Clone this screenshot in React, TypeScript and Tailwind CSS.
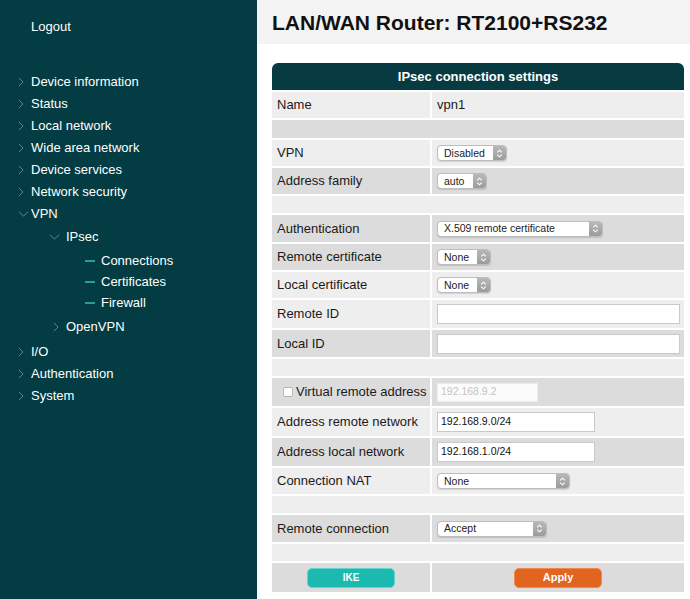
import React from "react";

const FONT = { fontFamily: '"Liberation Sans", Arial, Helvetica, sans-serif' };

function ChevRight() {
  return (
    <svg width="6" height="10" viewBox="0 0 6 10" className="block">
      <polyline points="0.8,0.8 5,5 0.8,9.2" fill="none" stroke="#4f8a8e" strokeWidth="1" />
    </svg>
  );
}

function ChevDown() {
  return (
    <svg width="11" height="6" viewBox="0 0 11 6" className="block">
      <polyline points="0.8,0.8 5.5,5 10.2,0.8" fill="none" stroke="#4f8a8e" strokeWidth="1" />
    </svg>
  );
}

function Dash() {
  return <div className="w-[10px] h-[2px] bg-[#2c9c95]" />;
}

function TopItem({ label, open }: { label: string; open?: boolean }) {
  return (
    <div className="flex items-center h-[22px] pl-[18px]">
      <div className="w-[13px] flex items-center">{open ? <ChevDown /> : <ChevRight />}</div>
      <span>{label}</span>
    </div>
  );
}

function Sidebar() {
  return (
    <div className="w-[257px] shrink-0 bg-[#033c42] text-white text-[13px] h-[599px]">
      <div className="h-[53px] flex items-center pl-[31px]">Logout</div>
      <div className="mt-[18px]">
        <TopItem label="Device information" />
        <TopItem label="Status" />
        <TopItem label="Local network" />
        <TopItem label="Wide area network" />
        <TopItem label="Device services" />
        <TopItem label="Network security" />
        <TopItem label="VPN" open />
        <div className="flex items-center h-[22px] pl-[49px] mt-[1px]">
          <div className="w-[17px] flex items-center">
            <ChevDown />
          </div>
          <span>IPsec</span>
        </div>
        <div className="mt-[2px]">
          {["Connections", "Certificates", "Firewall"].map((t) => (
            <div key={t} className="flex items-center h-[21px] pl-[85px]">
              <div className="w-[16px] flex items-center">
                <Dash />
              </div>
              <span>{t}</span>
            </div>
          ))}
        </div>
        <div className="flex items-center h-[22px] pl-[53px] mt-[3px]">
          <div className="w-[13px] flex items-center">
            <ChevRight />
          </div>
          <span>OpenVPN</span>
        </div>
        <div className="mt-[3px]">
          <TopItem label="I/O" />
          <TopItem label="Authentication" />
          <TopItem label="System" />
        </div>
      </div>
    </div>
  );
}

function SelectArrows() {
  return (
    <svg width="7" height="9" viewBox="0 0 7 9" className="block">
      <polyline points="1.2,3.4 3.5,1.2 5.8,3.4" fill="none" stroke="#ffffff" strokeWidth="1.1" />
      <polyline points="1.2,5.6 3.5,7.8 5.8,5.6" fill="none" stroke="#ffffff" strokeWidth="1.1" />
    </svg>
  );
}

function FakeSelect({ text, width }: { text: string; width: number }) {
  return (
    <div
      className="h-[16px] flex items-stretch rounded-[4px] border border-[#bdbdbd] bg-white overflow-hidden shadow-[0_1px_1px_rgba(0,0,0,0.12)]"
      style={{ width }}
    >
      <div className="flex-1 flex items-center pl-[6px] text-[10.5px] text-[#222] leading-none">{text}</div>
      <div className="w-[13px] bg-gradient-to-b from-[#b8b8b8] to-[#9c9c9c] flex items-center justify-center">
        <SelectArrows />
      </div>
    </div>
  );
}

function FakeInput({ value, width, disabled }: { value?: string; width: number; disabled?: boolean }) {
  return (
    <div
      className={
        disabled
          ? "h-[19px] bg-[#fbfbfb] border border-[#ececec] flex items-center pl-[3px] text-[10.5px] text-[#c4c4c4]"
          : "h-[20px] bg-white border border-[#c9c9c9] flex items-center pl-[3px] text-[10.5px] text-[#111]"
      }
      style={{ width }}
    >
      {value}
    </div>
  );
}

type RowProps = {
  label?: React.ReactNode;
  value?: React.ReactNode;
  dark?: boolean;
  h: string;
};

function Row({ label, value, dark, h }: RowProps) {
  const bg = dark ? "bg-[#dcdcdc]" : "bg-[#eeeeee]";
  return (
    <div className={`flex gap-[2px] ${h}`}>
      <div className={`w-[158px] shrink-0 ${bg} flex items-center pl-[5px]`}>{label}</div>
      <div className={`flex-1 ${bg} flex items-center pl-[5px]`}>{value}</div>
    </div>
  );
}

function Spacer({ dark }: { dark?: boolean }) {
  return <div className={`h-[17px] ${dark ? "bg-[#dcdcdc]" : "bg-[#eeeeee]"}`} />;
}

export default function App() {
  return (
    <div className="flex w-[690px] h-[599px] overflow-hidden bg-white" style={FONT}>
      <Sidebar />
      <div className="flex-1 bg-white">
        <div className="h-[44px] bg-[#f3f3f3] flex items-center pl-[15px]">
          <h1 className="text-[21px] font-bold text-[#111] leading-none">LAN/WAN Router: RT2100+RS232</h1>
        </div>
        <div className="ml-[15px] mt-[19px] w-[412px] flex flex-col gap-[2px] text-[13px] text-[#1a1a1a]">
          <div className="h-[27px] rounded-t-[6px] bg-[#073b41] flex items-center justify-center text-white font-bold text-[13px]">
            IPsec connection settings
          </div>
          <Row h="h-[26px]" label="Name" value="vpn1" />
          <div className="h-[18px] bg-[#dcdcdc]" />
          <Row h="h-[26px]" label="VPN" value={<FakeSelect text="Disabled" width={70} />} />
          <Row h="h-[26px]" dark label="Address family" value={<FakeSelect text="auto" width={50} />} />
          <Spacer />
          <Row h="h-[27px]" dark label="Authentication" value={<FakeSelect text="X.509 remote certificate" width={166} />} />
          <Row h="h-[26px]" dark label="Remote certificate" value={<FakeSelect text="None" width={54} />} />
          <Row h="h-[26px]" label="Local certificate" value={<FakeSelect text="None" width={54} />} />
          <Row h="h-[28px]" label="Remote ID" value={<FakeInput width={243} />} />
          <Row h="h-[27px]" dark label="Local ID" value={<FakeInput width={243} />} />
          <Spacer />
          <Row
            h="h-[28px]"
            dark
            label={
              <div className="flex items-center pl-[6px]">
                <div className="w-[10px] h-[10px] rounded-[2px] border border-[#b5b5b5] bg-white mr-[3px]" />
                <span>Virtual remote address</span>
              </div>
            }
            value={<FakeInput width={101} value="192.168.9.2" disabled />}
          />
          <Row h="h-[28px]" label="Address remote network" value={<FakeInput width={158} value="192.168.9.0/24" />} />
          <Row h="h-[28px]" dark label="Address local network" value={<FakeInput width={158} value="192.168.1.0/24" />} />
          <Row h="h-[26px]" label="Connection NAT" value={<FakeSelect text="None" width={133} />} />
          <Spacer />
          <Row h="h-[27px]" dark label="Remote connection" value={<FakeSelect text="Accept" width={110} />} />
          <Spacer />
          <div className="flex gap-[2px] h-[29px]">
            <div className="w-[158px] shrink-0 bg-[#dcdcdc] flex items-center justify-center">
              <div className="w-[88px] h-[20px] rounded-[5px] bg-[#1cb9b1] border border-[#63d6cf] flex items-center justify-center text-white font-bold text-[10px]">
                IKE
              </div>
            </div>
            <div className="flex-1 bg-[#dcdcdc] flex items-center justify-center">
              <div className="w-[88px] h-[20px] rounded-[5px] bg-[#e2651f] border border-[#ef8a4f] flex items-center justify-center text-white font-bold text-[11px]">
                Apply
              </div>
            </div>
          </div>
        </div>
      </div>
    </div>
  );
}
